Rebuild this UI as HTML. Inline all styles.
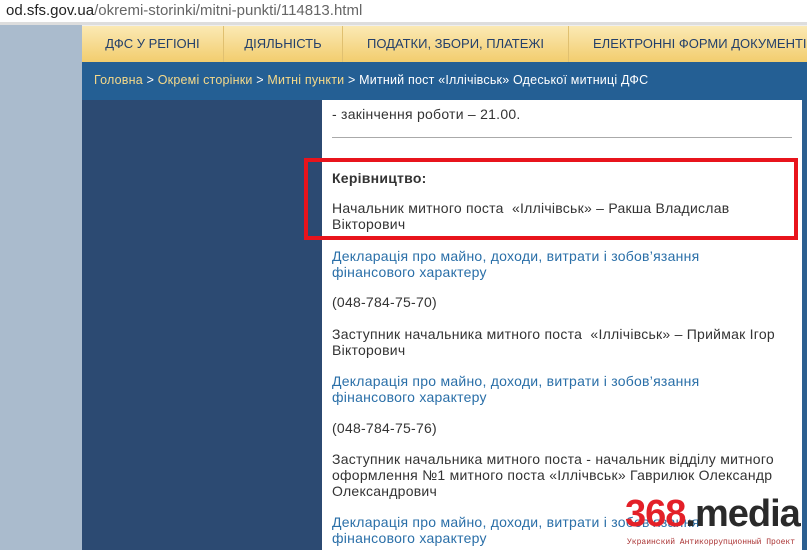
<!DOCTYPE html>
<html><head><meta charset="utf-8"><style>
*{margin:0;padding:0;box-sizing:border-box}
body{width:807px;height:550px;overflow:hidden;background:#fff;font-family:"Liberation Sans","DejaVu Sans",sans-serif;position:relative}
.a{position:absolute}
.t{position:absolute;left:332px;font-size:14px;letter-spacing:0.25px;color:#333;white-space:nowrap;line-height:16px}
.l{color:#2a6fa8}
.nav{position:absolute;top:26px;height:36px;background:linear-gradient(#fbe9b4,#f2cd6e);border-right:1px solid #e0c070;font-size:13px;color:#24406a;text-align:center;line-height:36px;white-space:nowrap;overflow:hidden}
</style></head><body>
<div class="a" style="left:6px;top:2px;font-size:15px;color:#222">od.sfs.gov.ua<span style="color:#666">/okremi-storinki/mitni-punkti/114813.html</span></div>
<div class="a" style="left:0;top:22px;width:807px;height:3px;background:#ddd"></div>
<div class="a" style="left:0;top:25px;width:82px;height:525px;background:#aabbcd"></div>
<div class="a" style="left:82px;top:25px;width:725px;height:1px;background:#eee"></div>
<div class="nav" style="left:82px;width:142px">ДФС У РЕГІОНІ</div>
<div class="nav" style="left:224px;width:119px">ДІЯЛЬНІСТЬ</div>
<div class="nav" style="left:343px;width:226px">ПОДАТКИ, ЗБОРИ, ПЛАТЕЖІ</div>
<div class="nav" style="left:569px;width:238px;text-align:left;padding-left:24px;border:none">ЕЛЕКТРОННІ ФОРМИ ДОКУМЕНТІВ</div>
<div class="a" style="left:82px;top:62px;width:725px;height:38px;background:#245f94"></div>
<div class="a" style="left:94px;top:73px;font-size:12.5px;letter-spacing:0.2px;color:#f5d98a;white-space:nowrap">Головна <span style="color:#fff">&gt;</span> Окремі сторінки <span style="color:#fff">&gt;</span> Митні пункти <span style="color:#fff">&gt; Митний пост «Іллічівськ» Одеської митниці ДФС</span></div>
<div class="a" style="left:82px;top:100px;width:240px;height:450px;background:#2c4a72"></div>
<div class="a" style="left:802px;top:100px;width:5px;height:450px;background:#2c5f90"></div>
<div class="t" style="top:106px">- закінчення роботи – 21.00.</div>
<div class="a" style="left:332px;top:137px;width:460px;height:1px;background:#aaa"></div>
<div class="a" style="left:304px;top:158px;width:494px;height:82px;border:4px solid #e8141c"></div>
<div class="t" style="top:170px;font-weight:bold">Керівництво:</div>
<div class="t" style="top:200px">Начальник митного поста &nbsp;«Іллічівськ» – Ракша Владислав</div>
<div class="t" style="top:216px">Вікторович</div>
<div class="t l" style="top:248px">Декларація про майно, доходи, витрати і зобов’язання</div>
<div class="t l" style="top:264px">фінансового характеру</div>
<div class="t" style="top:294px">(048-784-75-70)</div>
<div class="t" style="top:326px">Заступник начальника митного поста &nbsp;«Іллічівськ» – Приймак Ігор</div>
<div class="t" style="top:342px">Вікторович</div>
<div class="t l" style="top:373px">Декларація про майно, доходи, витрати і зобов’язання</div>
<div class="t l" style="top:389px">фінансового характеру</div>
<div class="t" style="top:420px">(048-784-75-76)</div>
<div class="t" style="top:451px">Заступник начальника митного поста - начальник відділу митного</div>
<div class="t" style="top:467px">оформлення №1 митного поста «Іллічвськ» Гаврилюк Олександр</div>
<div class="t" style="top:483px">Олександрович</div>
<div class="t l" style="top:514px">Декларація про майно, доходи, витрати і зобов’язання</div>
<div class="t l" style="top:530px">фінансового характеру</div>
<div class="a" style="left:625px;top:494px;font-size:38px;font-weight:bold;font-family:'Liberation Sans',sans-serif;letter-spacing:-1px;white-space:nowrap;line-height:40px"><span style="color:#e32028">368</span><span style="color:#2a2a2a">.media</span></div>
<div class="a" style="left:627px;top:538px;font-size:8px;color:#a33;font-family:'Liberation Mono',monospace;white-space:nowrap">Украинский Антикоррупционный Проект</div>
</body></html>
